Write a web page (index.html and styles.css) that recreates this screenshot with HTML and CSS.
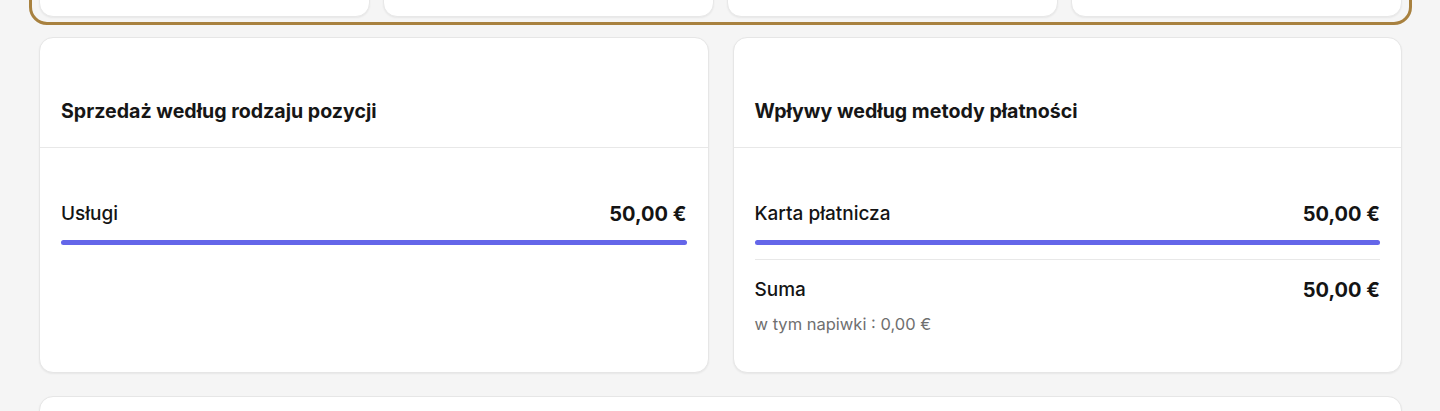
FILE: index.html
```html
<!DOCTYPE html>
<html lang="pl">
<head>
    <meta charset="UTF-8">
    <meta name="viewport" content="width=device-width, initial-scale=1.0">
    <title>Raport sprzedaży</title>
    <link rel="stylesheet" href="styles.css">
</head>
<body>
<div class="page">
    <div class="summary-strip">
        <div class="stat-card"></div>
        <div class="stat-card"></div>
        <div class="stat-card"></div>
        <div class="stat-card"></div>
    </div>

    <div class="report-grid">
        <div class="panel">
            <div class="panel-header">
                <h2>Sprzedaż według rodzaju pozycji</h2>
            </div>
            <div class="panel-body">
                <div class="line">
                    <span class="line-label">Usługi</span>
                    <span class="line-value">50,00 €</span>
                </div>
                <div class="bar"><div class="bar-fill" style="width: 100%;"></div></div>
            </div>
        </div>

        <div class="panel">
            <div class="panel-header">
                <h2>Wpływy według metody płatności</h2>
            </div>
            <div class="panel-body">
                <div class="line">
                    <span class="line-label">Karta płatnicza</span>
                    <span class="line-value">50,00 €</span>
                </div>
                <div class="bar"><div class="bar-fill" style="width: 100%;"></div></div>
                <div class="total">
                    <div class="line">
                        <span class="line-label">Suma</span>
                        <span class="line-value">50,00 €</span>
                    </div>
                    <div class="note">w tym napiwki : 0,00 €</div>
                </div>
            </div>
        </div>
    </div>

    <div class="panel panel-next"></div>
</div>
</body>
</html>
```

FILE: styles.css
```css
* {
    box-sizing: border-box;
}
body {
    margin: 0;
    font-family: Inter, "Noto Sans", sans-serif;
    background: #f5f5f5;
    color: #141414;
}
.page {
    padding: 0 38px 0 39px;
}
.summary-strip {
    display: grid;
    grid-template-columns: repeat(4, 1fr);
    gap: 13px;
    margin: -61px -10px 0;
    padding: 7px 7px 5px;
    border: 3px solid #a8813f;
    border-radius: 18px;
}
.stat-card {
    height: 68px;
    background: #fff;
    border: 1px solid #e8e8e8;
    border-radius: 14px;
    box-shadow: 0 1px 2px rgba(0, 0, 0, 0.06);
}
.report-grid {
    display: grid;
    grid-template-columns: 1fr 1fr;
    gap: 24px;
    margin-top: 12px;
}
.panel {
    background: #fff;
    border: 1px solid #e6e6e6;
    border-radius: 14px;
    box-shadow: 0 1px 2px rgba(0, 0, 0, 0.06);
    min-height: 336px;
}
.panel-header {
    padding: 60px 21px 23px;
    border-bottom: 1px solid #e8e8e8;
}
.panel-header h2 {
    margin: 0;
    font-size: 19.6px;
    line-height: 26px;
    font-weight: 700;
    color: #161616;
}
.panel-body {
    padding: 54px 21px 37px;
}
.line {
    display: flex;
    justify-content: space-between;
    align-items: center;
    line-height: 24px;
}
.line-label {
    font-size: 19px;
    font-weight: 500;
}
.line-value {
    font-size: 20px;
    font-weight: 700;
}
.bar {
    height: 5px;
    margin-top: 14px;
    border-radius: 3px;
    background: #eef0ff;
}
.bar-fill {
    height: 100%;
    border-radius: 3px;
    background: #6466e9;
}
.total {
    margin-top: 14px;
    padding-top: 18px;
    border-top: 1px solid #e8e8e8;
}
.note {
    margin-top: 11px;
    font-size: 16.5px;
    line-height: 22px;
    color: #6f6f6f;
}
.panel-next {
    margin-top: 23px;
}
```
